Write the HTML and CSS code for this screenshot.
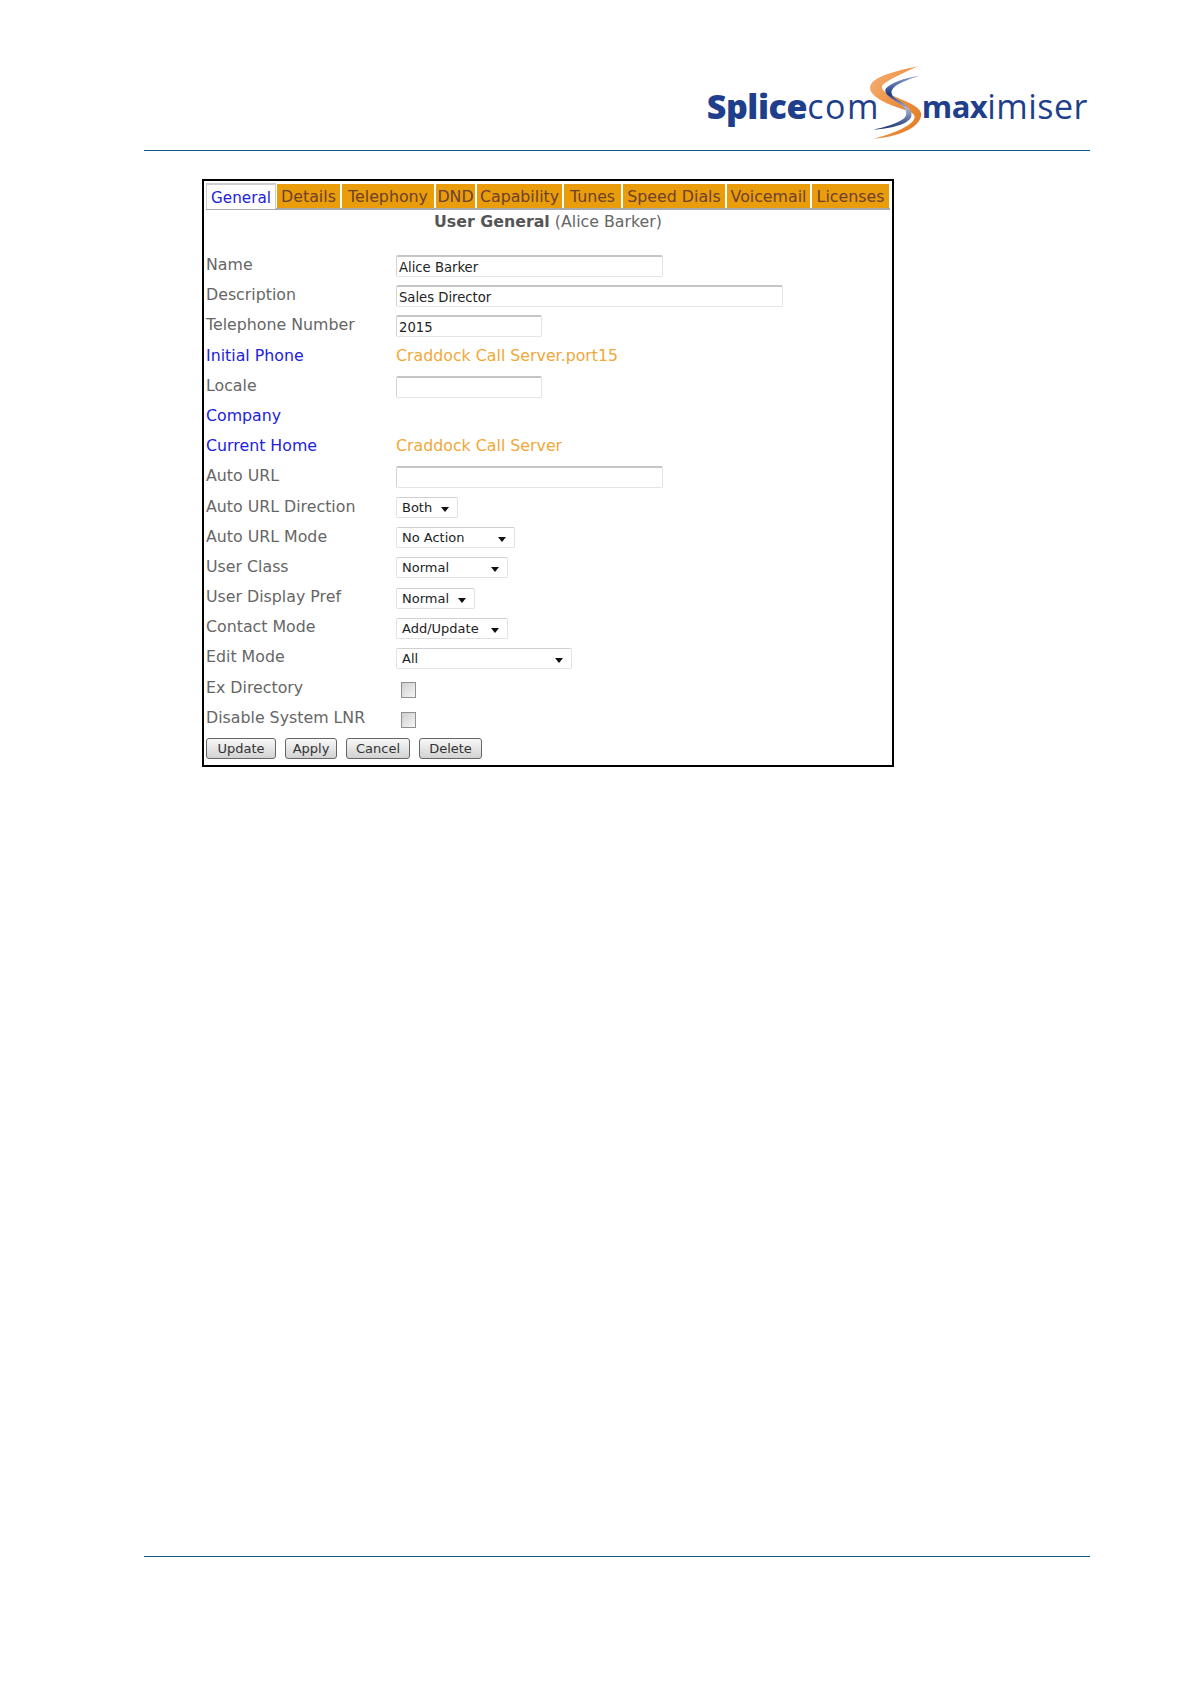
FILE: index.html
```html
<!DOCTYPE html>
<html lang="en">
<head>
<meta charset="utf-8">
<title>User General</title>
<link rel="stylesheet" href="styles.css">
</head>
<body>
<div class="page">
  <header class="doc-head">
    <div class="logo">
      <span class="lg-b">Splice</span><span class="lg-l lg-c">com</span>
      <svg class="swoosh" viewBox="530 40 170 230" width="57" height="77" aria-hidden="true">
        <defs>
          <linearGradient id="og" x1="0" y1="0" x2="1" y2="1">
            <stop offset="0" stop-color="#f4b27a"/>
            <stop offset=".5" stop-color="#ee9040"/>
            <stop offset="1" stop-color="#e07a20"/>
          </linearGradient>
          <linearGradient id="bg" x1="0" y1="0" x2="0" y2="1">
            <stop offset="0" stop-color="#8f9fc8"/>
            <stop offset=".35" stop-color="#1d3a8a"/>
            <stop offset=".6" stop-color="#a9b6d8"/>
            <stop offset="1" stop-color="#16306f"/>
          </linearGradient>
        </defs>
        <path fill="url(#og)" d="M682 47C630 58 565 72 543 98C530 118 548 138 590 158C640 178 668 182 672 195C676 218 620 245 550 263C620 258 690 232 692 190C690 165 640 150 600 132C570 118 566 105 590 92C620 76 650 60 682 47Z"/>
        <path fill="url(#bg)" d="M686 75C640 82 600 96 585 115C580 130 605 145 630 160C650 175 652 190 640 203C620 218 585 228 550 236C600 232 650 222 662 198C668 178 645 160 620 146C600 134 598 122 612 108C630 94 660 84 686 75Z"/>
      </svg>
      <span class="lg-m">max</span><span class="lg-l lg-i">imiser</span>
    </div>
  </header>

  <main class="frame">
    <nav class="tabs">
      <a class="tab tab-on">General</a>
      <a class="tab t1">Details</a>
      <a class="tab t2">Telephony</a>
      <a class="tab t3">DND</a>
      <a class="tab t4">Capability</a>
      <a class="tab t5">Tunes</a>
      <a class="tab t6">Speed Dials</a>
      <a class="tab t7">Voicemail</a>
      <a class="tab t8">Licenses</a>
    </nav>
    <h1 class="title"><b>User General</b> (Alice Barker)</h1>
    <form class="form">
      <label class="lbl">Name</label><input class="inp w-l" value="Alice Barker">
      <label class="lbl">Description</label><input class="inp w-xl" value="Sales Director">
      <label class="lbl">Telephone Number</label><input class="inp w-s" value="2015">
      <a class="lbl link">Initial Phone</a><span class="val">Craddock Call Server.port15</span>
      <label class="lbl">Locale</label><input class="inp w-s">
      <a class="lbl link">Company</a><span class="val"></span>
      <a class="lbl link">Current Home</a><span class="val">Craddock Call Server</span>
      <label class="lbl">Auto URL</label><input class="inp w-l">
      <label class="lbl">Auto URL Direction</label><div class="sel s62"><select><option>Both</option></select></div>
      <label class="lbl">Auto URL Mode</label><div class="sel s119"><select><option>No Action</option></select></div>
      <label class="lbl">User Class</label><div class="sel s112"><select><option>Normal</option></select></div>
      <label class="lbl">User Display Pref</label><div class="sel s79"><select><option>Normal</option></select></div>
      <label class="lbl">Contact Mode</label><div class="sel s112"><select><option>Add/Update</option></select></div>
      <label class="lbl">Edit Mode</label><div class="sel s176"><select><option>All</option></select></div>
      <label class="lbl">Ex Directory</label><input class="chk" type="checkbox">
      <label class="lbl">Disable System LNR</label><input class="chk" type="checkbox">
      <div class="btns">
        <button type="button" class="btn b-u">Update</button>
        <button type="button" class="btn b-a">Apply</button>
        <button type="button" class="btn b-c">Cancel</button>
        <button type="button" class="btn b-d">Delete</button>
      </div>
    </form>
  </main>

  <footer class="doc-foot"></footer>
</div>
</body>
</html>
```

FILE: styles.css
```css
* { box-sizing: border-box; }
html, body { margin: 0; padding: 0; background: #fff; }
body { font-family: "DejaVu Sans", Verdana, sans-serif; }
.page { width: 1191px; height: 1684px; display: flex; flex-direction: column; }

.doc-head {
  margin-left: 144px; width: 946px; height: 151px;
  border-bottom: 1px solid #14588a;
  display: flex; justify-content: flex-end; align-items: flex-start;
  padding-top: 64px;
}
.logo { display: flex; align-items: center; height: 76px; padding-right: 2px; font-family: "Open Sans", sans-serif; font-size: 34px; color: #1f3f8c; line-height: 1; }
.logo span { margin-top: 8px; }
.lg-b { font-weight: 800; letter-spacing: -.4px; }
.lg-m { font-weight: 700; font-size: 31px; letter-spacing: -.6px; }
.lg-l { font-weight: 400; letter-spacing: .8px; }
.lg-c { letter-spacing: 1.5px; }
.lg-i { letter-spacing: .5px; }
.swoosh { margin: 0 -2px 0 -13px; flex: none; }

.frame {
  margin: 28px 0 0 202px; width: 692px; height: 588px;
  border: 2px solid #000; padding: 3px 0 0 2px;
  color: #666; font-size: 15.8px;
}
.tabs { display: flex; width: 684px; height: 26px; border-bottom: 2px solid #aaa; }
.tab {
  height: 24px; margin-right: 2px;
  background: #e99d0a; color: #6e4030;
  font-size: 15.8px; line-height: 25px; text-align: center; white-space: nowrap;
}
.tab-on {
  width: 70px; height: 26px; margin: -1px 1px 0 0; position: relative;
  background: #fff; color: #2222dd; font-size: 15.2px; line-height: 27px;
  border: 1px solid #ccc; border-top-width: 2px; border-bottom: 0;
}
.t1 { width: 63px; } .t2 { width: 92px; } .t3 { width: 39px; }
.t4 { width: 85px; } .t5 { width: 57px; } .t6 { width: 102px; }
.t7 { width: 83px; } .t8 { width: 77px; margin-right: 0; }

.title { margin: 1px 0 0; height: 39px; width: 684px; font-size: 15.8px; font-weight: 400; line-height: 22px; text-align: center; color: #666; }
.title b { color: #555; }

.form { display: grid; grid-template-columns: 190px 1fr; grid-auto-rows: 30.2px; align-items: center; }
.lbl { color: #666; font-size: 15.8px; line-height: 30px; height: 30px; align-self: start; white-space: nowrap; }
.link { color: #2222dd; }
.val { color: #f0a838; font-size: 15.8px; line-height: 30px; height: 30px; align-self: start; }

.inp {
  height: 22px; margin-top: 2px; padding: 1px 2px 0; font: 13.2px "DejaVu Sans", sans-serif; color: #222;
  border: 1px solid #e4e4e4; border-top: 2px solid #c6c6c6; border-left-color: #d4d4d4; border-radius: 2px;
  background: #fff; outline: 0;
}
.w-s { width: 146px; } .w-l { width: 267px; } .w-xl { width: 387px; }

.sel { position: relative; height: 21px; margin-top: 2px; }
.sel select {
  appearance: none; -webkit-appearance: none; width: 100%; height: 21px;
  font: 13px "DejaVu Sans", sans-serif; color: #222; padding: 0 0 0 5px;
  border: 1px solid #e2e2e2; border-top-color: #d0d0d0; border-radius: 2px; background: #fff; outline: 0;
}
.sel::after {
  content: ""; position: absolute; right: 9px; top: 10px;
  border: 4px solid transparent; border-top: 5px solid #111; border-bottom: 0;
}
.s62 { width: 62px; } .s79 { width: 79px; } .s112 { width: 112px; } .s119 { width: 119px; } .s176 { width: 176px; }

.chk {
  appearance: none; -webkit-appearance: none; margin: 4px 0 0 5px; width: 15px; height: 16px;
  border: 1px solid #8f8f8f; border-radius: 0; background: linear-gradient(135deg, #cfcfcf, #f6f6f6);
}

.btns { grid-column: 1 / 3; display: flex; gap: 9px; }
.btn {
  height: 21px; padding: 0; font: 13px "DejaVu Sans", sans-serif; color: #333;
  border: 1px solid #666; border-radius: 3px; background: linear-gradient(#f8f8f8, #d2d2d2);
}
.b-u { width: 70px; } .b-a { width: 52px; } .b-c { width: 64px; } .b-d { width: 63px; }

.doc-foot { margin: 789px 0 0 144px; width: 946px; border-top: 1px solid #14588a; height: 1px; }
```
